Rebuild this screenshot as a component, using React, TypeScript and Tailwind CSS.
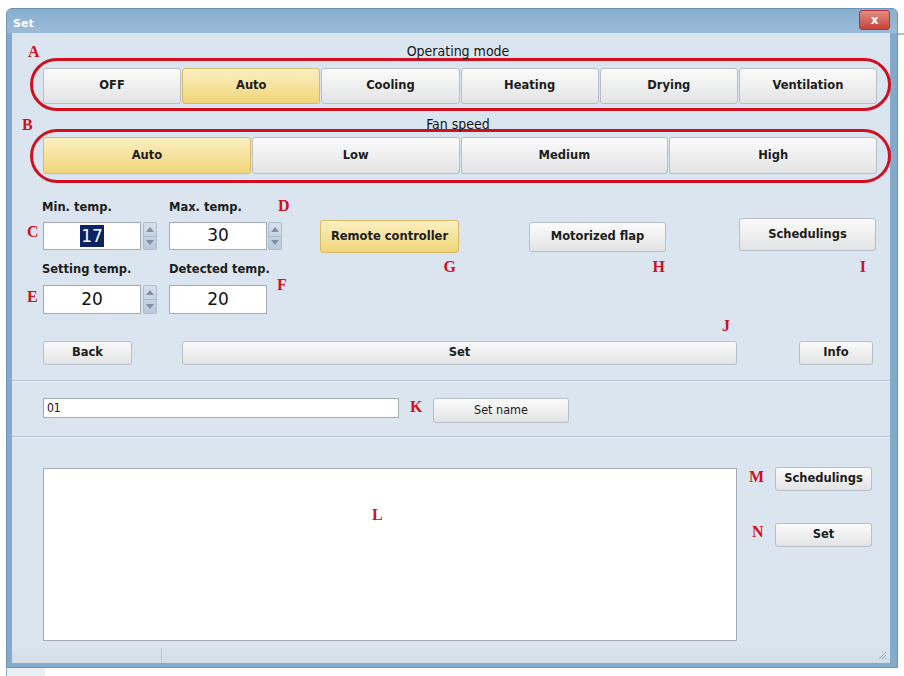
import React from "react";

type BtnProps = {
  children: React.ReactNode;
  active?: boolean;
  className?: string;
};

const Btn: React.FC<BtnProps> = ({ children, active, className = "" }) => (
  <button
    type="button"
    className={`flex items-center justify-center rounded-[3px] border text-[11.5px] font-bold text-[#1c1c1c] ${
      active
        ? "border-[#d6bb66] bg-linear-to-b from-[#fcf0c2] to-[#f0d477]"
        : "border-[#b7bec6] bg-linear-to-b from-[#fbfbfb] to-[#e2e3e4]"
    } ${className}`}
  >
    {children}
  </button>
);

// red annotation letters laid over the screenshot
const Mark: React.FC<{ children: React.ReactNode; className?: string }> = ({
  children,
  className = "",
}) => (
  <span
    className={`block font-['Liberation_Serif',serif] text-[16px] font-bold leading-[16px] text-[#cf1020] ${className}`}
  >
    {children}
  </span>
);

const Spinner: React.FC = () => (
  <div className="flex h-full w-[14px] flex-col overflow-hidden rounded-[2px] border border-[#aebdcc] bg-linear-to-b from-[#d6e0ea] to-[#b9c9d8]">
    <div className="flex flex-1 items-center justify-center border-b border-[#aebdcc]">
      <svg width="8" height="5" viewBox="0 0 8 5">
        <path d="M0 5 L4 0 L8 5 Z" fill="#7b90a6" />
      </svg>
    </div>
    <div className="flex flex-1 items-center justify-center">
      <svg width="8" height="5" viewBox="0 0 8 5">
        <path d="M0 0 L8 0 L4 5 Z" fill="#7b90a6" />
      </svg>
    </div>
  </div>
);

const NumBox: React.FC<{ value: string; selected?: boolean; h: string }> = ({
  value,
  selected,
  h,
}) => (
  <div
    className={`flex w-[98px] ${h} items-center justify-center border border-[#a3aab2] bg-white text-[17px] font-normal text-[#111]`}
  >
    {selected ? (
      <span className="bg-[#0b2465] px-[1px] leading-[22px] text-white">{value}</span>
    ) : (
      <span>{value}</span>
    )}
  </div>
);

const modes = ["OFF", "Auto", "Cooling", "Heating", "Drying", "Ventilation"];
const speeds = ["Auto", "Low", "Medium", "High"];

export default function App() {
  return (
    <div className="min-h-screen bg-white font-['DejaVu_Sans',sans-serif]">
      <div className="flex pt-[8px]">
        {/* window */}
        <div className="ml-[6px] w-[892px] overflow-hidden rounded-t-[6px] border border-[#6d95b9] bg-[#84aacb]">
          {/* title bar */}
          <div className="flex h-[24px] bg-linear-to-b from-[#88aecd] to-[#9bbcd8]">
            <span className="ml-[6px] pt-[9px] text-[11px] font-bold leading-[11px] text-white">
              Set
            </span>
            <button
              type="button"
              className="mr-[7px] ml-auto mt-[1px] flex h-[20px] w-[31px] items-center justify-center rounded-[3px] border border-[#a8363a] bg-linear-to-b from-[#e48a82] to-[#c4433c] text-[12px] font-bold leading-none text-white"
            >
              x
            </button>
          </div>

          <div className="flex pb-[4px] pl-[5px] pr-[7px]">
            {/* client area */}
            <div className="flex h-[630px] w-[878px] flex-col bg-[#dbe5ef]">
              {/* operating mode */}
              <div className="relative h-[25px]">
                <Mark className="absolute left-[16px] top-[11px]">A</Mark>
                <p className="pl-[14px] pt-[11px] text-center font-['DejaVu_Sans_Condensed','Liberation_Sans_Narrow',sans-serif] text-[14px] leading-[14px] text-[#151515]">
                  Operating mode
                </p>
              </div>
              <div className="ml-[18px] flex h-[53px] w-[861px] gap-[1px] rounded-[27px] border-[3px] border-[#cf1020] pl-[10px] pr-[11px] pt-[7px]">
                {modes.map((m) => (
                  <Btn key={m} active={m === "Auto"} className="h-[36px] flex-1">
                    {m}
                  </Btn>
                ))}
              </div>

              {/* fan speed */}
              <div className="relative h-[18px]">
                <Mark className="absolute left-[10px] top-[6px]">B</Mark>
                <p className="pl-[14px] pt-[6px] text-center font-['DejaVu_Sans_Condensed','Liberation_Sans_Narrow',sans-serif] text-[14px] leading-[14px] text-[#151515]">
                  Fan speed
                </p>
              </div>
              <div className="ml-[18px] flex h-[54px] w-[861px] gap-[1px] rounded-[27px] border-[3px] border-[#cf1020] pl-[10px] pr-[11px] pt-[5px]">
                {speeds.map((s, i) => (
                  <Btn key={s} active={i === 0} className="h-[37px] flex-1">
                    {s}
                  </Btn>
                ))}
              </div>

              {/* temperatures and function buttons */}
              <div className="flex">
                <div className="w-[308px] text-[11.5px] font-bold text-[#1c1c1c]">
                  <div className="mt-[16px] flex h-[17px] leading-[17px]">
                    <span className="ml-[30px] w-[127px]">Min. temp.</span>
                    <span className="w-[109px]">Max. temp.</span>
                    <Mark className="-mt-[1px]">D</Mark>
                  </div>
                  <div className="mt-[6px] flex h-[28px]">
                    <Mark className="ml-[15px] mt-[2px] w-[16px]">C</Mark>
                    <NumBox value="17" selected h="h-[28px]" />
                    <div className="ml-[2px]">
                      <Spinner />
                    </div>
                    <div className="ml-[12px]">
                      <NumBox value="30" h="h-[28px]" />
                    </div>
                    <div className="ml-[1px]">
                      <Spinner />
                    </div>
                  </div>
                  <div className="mt-[11px] flex h-[17px] leading-[17px]">
                    <span className="ml-[30px] w-[127px]">Setting temp.</span>
                    <span>Detected temp.</span>
                  </div>
                  <div className="mt-[7px] flex h-[29px]">
                    <Mark className="ml-[15px] mt-[4px] w-[16px]">E</Mark>
                    <NumBox value="20" h="h-[29px]" />
                    <div className="ml-[2px]">
                      <Spinner />
                    </div>
                    <div className="ml-[12px]">
                      <NumBox value="20" h="h-[29px]" />
                    </div>
                    <Mark className="-mt-[8px] ml-[10px]">F</Mark>
                  </div>
                </div>

                <div className="mt-[37px] flex w-[139px] flex-col items-end">
                  <Btn active className="h-[33px] w-full">
                    Remote controller
                  </Btn>
                  <Mark className="mr-[3px] mt-[6px]">G</Mark>
                </div>
                <div className="ml-[70px] mt-[39px] flex w-[137px] flex-col items-end">
                  <Btn className="h-[30px] w-full">Motorized flap</Btn>
                  <Mark className="mr-[1px] mt-[7px]">H</Mark>
                </div>
                <div className="ml-[73px] mt-[35px] flex w-[137px] flex-col items-end">
                  <Btn className="h-[33px] w-full">Schedulings</Btn>
                  <Mark className="mr-[10px] mt-[8px]">I</Mark>
                </div>
              </div>

              <div className="mt-[4px] h-[16px] pl-[710px]">
                <Mark>J</Mark>
              </div>
              <div className="mt-[7px] flex h-[24px]">
                <Btn className="ml-[31px] w-[89px]">Back</Btn>
                <Btn className="ml-[50px] w-[555px]">Set</Btn>
                <Btn className="ml-[62px] w-[74px]">Info</Btn>
              </div>

              <div className="mt-[15px] h-[2px] border-t border-b border-t-[#b3c3d3] border-b-[#eef3f8]" />

              {/* name */}
              <div className="mt-[16px] flex items-start">
                <div className="ml-[31px] flex h-[20px] w-[356px] items-center border border-[#a3aab2] bg-white pl-[3px] font-['DejaVu_Sans_Condensed','Liberation_Sans_Narrow',sans-serif] text-[12px] text-[#111]">
                  01
                </div>
                <Mark className="ml-[11px] mt-[1px] w-[15px]">K</Mark>
                <div className="ml-[8px]">
                  <Btn className="h-[25px] w-[136px] font-['DejaVu_Sans_Condensed','Liberation_Sans_Narrow',sans-serif] !text-[12.5px] !font-normal">
                    Set name
                  </Btn>
                </div>
              </div>

              <div className="mt-[13px] h-[2px] border-t border-b border-t-[#b3c3d3] border-b-[#eef3f8]" />

              {/* list */}
              <div className="flex items-start">
                <div className="relative ml-[31px] mt-[30px] h-[173px] w-[694px] border border-[#a3aab2] bg-white">
                  <Mark className="absolute left-[328px] top-[38px]">L</Mark>
                </div>
                <div className="ml-[12px] mt-[29px] flex flex-col">
                  <div className="flex">
                    <Mark className="mt-[2px] w-[26px]">M</Mark>
                    <Btn className="h-[24px] w-[97px]">Schedulings</Btn>
                  </div>
                  <div className="mt-[32px] flex">
                    <Mark className="mt-[1px] w-[26px] pl-[3px]">N</Mark>
                    <Btn className="h-[24px] w-[97px]">Set</Btn>
                  </div>
                </div>
              </div>

              {/* status bar */}
              <div className="mt-auto flex h-[21px] bg-linear-to-b from-[#dde6ee] to-[#d2dde8]">
                <div className="ml-[149px] mt-[6px] h-[14px] w-px bg-[#b9c7d4]" />
                <svg className="ml-auto mr-[3px] mt-[8px]" width="10" height="10" viewBox="0 0 10 10">
                  <path d="M9 2 L2 9 M9 5 L5 9 M9 8 L8 9" stroke="#9aabbb" strokeWidth="1" />
                </svg>
              </div>
            </div>
          </div>
        </div>
        <div className="mt-[25px] h-[2px] w-[6px] bg-[#a9bccd]" />
      </div>
      <div className="ml-[6px] h-[8px] w-[39px] border-l border-[#8fa9c0] bg-[#e8eef4]" />
    </div>
  );
}
